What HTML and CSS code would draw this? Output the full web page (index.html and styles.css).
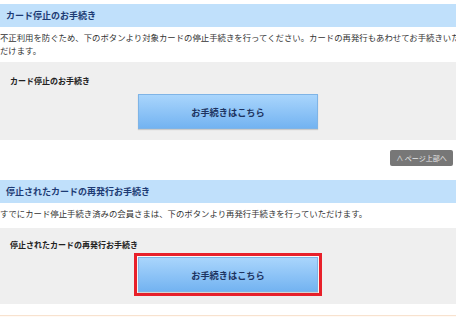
FILE: index.html
```html
<!DOCTYPE html>
<html lang="ja">
<head>
  <meta charset="UTF-8" />
  <meta name="viewport" content="width=device-width, initial-scale=1.0"/>
  <title>カード停止のお手続き</title>
  <link rel="stylesheet" href="styles.css">
</head>
<body>
  <div class="page">
    <section class="section">
      <h2 class="section-title">カード停止のお手続き</h2>
      <p class="lead">不正利用を防ぐため、下のボタンより対象カードの停止手続きを行ってください。カードの再発行もあわせてお手続きいた<br>だけます。</p>
      <div class="proc-box">
        <h3 class="proc-title">カード停止のお手続き</h3>
        <div class="btn-wrap">
          <a href="#" class="btn-proc">お手続きはこちら</a>
        </div>
      </div>
    </section>

    <div class="pagetop-row">
      <a href="#" class="pagetop">&#8743; ページ上部へ</a>
    </div>

    <section class="section">
      <h2 class="section-title">停止されたカードの再発行お手続き</h2>
      <p class="lead">すでにカード停止手続き済みの会員さまは、下のボタンより再発行手続きを行っていただけます。</p>
      <div class="proc-box proc-box-2">
        <h3 class="proc-title">停止されたカードの再発行お手続き</h3>
        <div class="btn-wrap">
          <span class="highlight">
            <a href="#" class="btn-proc">お手続きはこちら</a>
          </span>
        </div>
      </div>
    </section>

    <div class="next-box"></div>
  </div>
</body>
</html>
```

FILE: styles.css
```css
html, body { margin: 0; padding: 0; }
body {
  font-family: "Noto Sans CJK JP", "Noto Sans", sans-serif;
  background: #fff;
  color: #333;
  overflow: hidden;
}
.page { width: 456px; }

.section-title {
  margin: 0;
  height: 23px;
  line-height: 23px;
  padding-left: 6px;
  background: #c0e0fb;
  color: #1d3b74;
  font-size: 9px;
  font-weight: bold;
}
.section:first-child .section-title { margin-top: 4px; }

.lead {
  margin: 4px 0 0;
  font-size: 8.4px;
  line-height: 13px;
  white-space: nowrap;
  color: #333;
}

.proc-box {
  margin-top: 5px;
  background: #efefef;
  padding: 13px 0 11px;
}
.proc-title {
  margin: 0 0 0 10px;
  font-size: 8px;
  line-height: 12px;
  font-weight: bold;
  color: #222;
}
.btn-wrap {
  display: flex;
  justify-content: center;
  margin-top: 7px;
}
.btn-proc {
  display: flex;
  align-items: center;
  justify-content: center;
  width: 178px;
  height: 33px;
  border: 1px solid #7fb4e6;
  background: linear-gradient(#a9d5fc, #73b3f1);
  color: #1d3461;
  font-size: 9.2px;
  font-weight: bold;
  text-decoration: none;
  box-shadow: 0 1px 1px rgba(0, 0, 0, 0.15);
}

.pagetop-row {
  display: flex;
  justify-content: flex-end;
  padding: 10px 3px 14px 0;
}
.pagetop {
  display: block;
  width: 63px;
  height: 16px;
  line-height: 16px;
  text-align: center;
  background: #777;
  border-radius: 2px;
  color: #e8e8e8;
  font-size: 7px;
  text-decoration: none;
}

.proc-box-2 { margin-top: 8px; padding: 11px 0 8px; }
.proc-box-2 .btn-wrap { margin-top: 2px; }
.highlight {
  display: block;
  border: 3px solid #e8202a;
  padding: 1px;
  background: #fafafa;
}

.next-box {
  margin-top: 11px;
  height: 6px;
  border-top: 1px solid #f8e2cf;
  background: #fffaf5;
}
```
